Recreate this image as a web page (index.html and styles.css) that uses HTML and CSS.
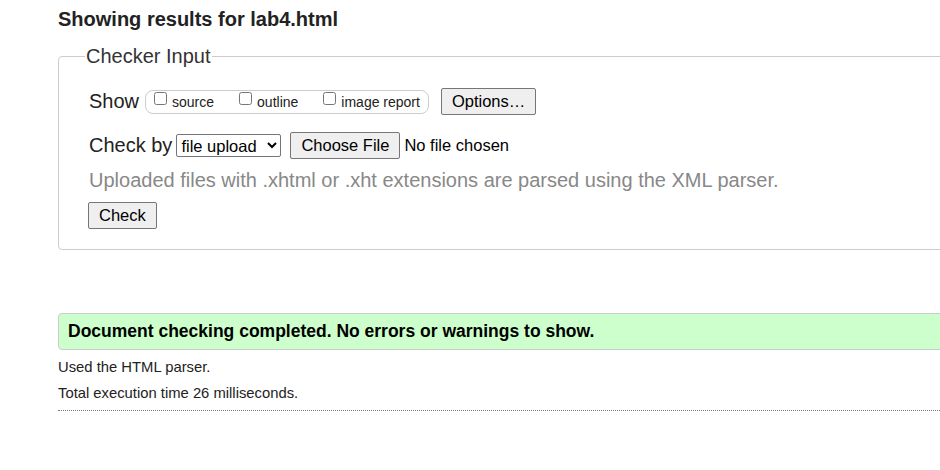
FILE: index.html
```html
<!DOCTYPE html>
<html>
<head>
<meta charset="utf-8">
<link rel="stylesheet" href="styles.css">
</head>
<body>
<div class="page">
  <h2 class="title">Showing results for lab4.html</h2>
  <fieldset class="input">
    <legend class="legend">Checker Input</legend>
    <div class="row">
      <span class="lbl">Show</span>
      <span class="opts">
        <label class="opt"><input type="checkbox" class="cb">source</label>
        <label class="opt"><input type="checkbox" class="cb">outline</label>
        <label class="opt"><input type="checkbox" class="cb">image report</label>
      </span>
      <button class="btn btn-options">Options…</button>
    </div>
    <div class="row row-check">
      <span class="lbl lbl-by">Check by</span>
      <select class="sel"><option>file upload</option></select>
      <button class="btn btn-file">Choose File</button>
      <span class="nofile">No file chosen</span>
    </div>
    <p class="hint">Uploaded files with .xhtml or .xht extensions are parsed using the XML parser.</p>
    <button class="btn btn-check">Check</button>
  </fieldset>
  <p class="success">Document checking completed. No errors or warnings to show.</p>
  <p class="note">Used the HTML parser.</p>
  <p class="note">Total execution time 26 milliseconds.</p>
  <hr class="rule">
</div>
</body>
</html>
```
FILE: styles.css
```css
html, body { margin: 0; padding: 0; overflow: hidden; background: #fff; }
body { font-family: "Liberation Sans", Arial, sans-serif; color: #222; }
.page { padding: 0 0 0 58px; width: 1100px; }
.title { margin: 0; padding-top: 8px; font-size: 20px; font-weight: bold; line-height: 22px; color: #222; }
.input {
  margin: 15px 0 0 0; padding: 0 0 20px 30px;
  border: 1px solid #ccc; border-radius: 4px;
}
.legend { font-size: 20px; color: #333; padding: 0 1px; margin-left: -4px; }
.row { display: flex; align-items: center; margin-top: 20px; }
.lbl { font-size: 20px; color: #222; margin-right: 6px; }
.lbl-by { margin-right: 4px; }
.opts { display: flex; align-items: center; border: 1px solid #ccc; border-radius: 8px; height: 22px; padding: 0 8px 0 8px; }
.opt { font-size: 14px; display: flex; align-items: center; color: #222; }
.opt + .opt { margin-left: 25px; }
.cb { margin: 0 5px 0 0; width: 13px; height: 13px; position: relative; top: -3px; }
.btn { font-family: "Liberation Sans", Arial, sans-serif; font-size: 16.5px; background: #efefef; border: 1px solid #767676; border-radius: 2px; color: #000; padding: 0 10px; height: 27px; box-sizing: border-box; }
.btn-options { margin-left: 12px; }
.row-check { margin-top: 17px; }
.sel { font-family: "Liberation Sans", Arial, sans-serif; font-size: 16.5px; height: 23px; width: 105px; border: 1px solid #767676; border-radius: 2px; background: #fff; color: #000; }
.btn-file { margin-left: 9px; }
.nofile { font-size: 16.5px; color: #000; margin-left: 4px; }
.hint { margin: 10px 0 0 0; font-size: 20px; line-height: 23px; color: #888; }
.btn-check { margin-top: 10px; margin-left: -1px; }
.success {
  margin: 63px 0 0 0; padding: 0 9px; height: 35px; line-height: 35px;
  background: #ccffcc; border: 1px solid #ccc; border-radius: 4px;
  font-size: 17.5px; font-weight: bold; color: #000;
}
.note { margin: 9px 0 0 0; font-size: 14.8px; color: #222; line-height: 17px; }
.rule { margin: 8px 0 0 0; border: 0; border-top: 1px dotted #777; width: 1000px; }
```
